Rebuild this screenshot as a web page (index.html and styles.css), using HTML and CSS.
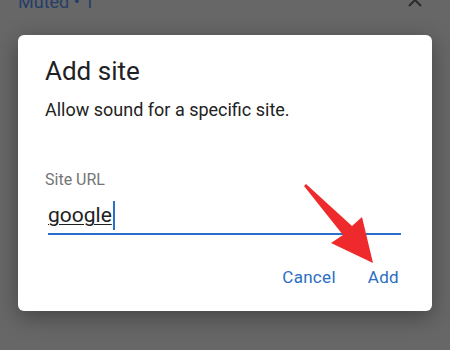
FILE: index.html
```html
<!DOCTYPE html>
<html lang="en">

<head>
    <meta charset="UTF-8">
    <meta name="viewport" content="width=device-width, initial-scale=1.0">
    <title>Add site</title>
    <link rel="stylesheet" href="styles.css">
</head>

<body>
    <!-- page behind the scrim -->
    <div class="topbar">
        <span class="muted">Muted &bull; 1</span>
        <svg class="close" width="14" height="14" viewBox="0 0 14 14">
            <path d="M1 1 L13 13 M13 1 L1 13" stroke="#2b2b2b" stroke-width="2" fill="none" />
        </svg>
    </div>

    <div class="dialog">
        <h1 class="title">Add site</h1>
        <p class="desc">Allow sound for a specific site.</p>
        <div class="label">Site URL</div>
        <div class="field">
            <span class="typed">google</span><span class="caret"></span>
        </div>
        <div class="actions">
            <a href="javascript:;" class="btn">Cancel</a>
            <a href="javascript:;" class="btn">Add</a>
        </div>
    </div>

    <!-- red pointer arrow -->
    <svg class="arrow" width="80" height="90" viewBox="0 0 80 90">
        <polygon points="4,6 6,4 52,46 62,37 73,83 31,63 43,55" fill="#ef2a2c" />
    </svg>
</body>

</html>
```

FILE: styles.css
```css
html,
body {
    background-color: #676767;
}

body {
    margin: 0;
    height: 350px;
    overflow: hidden;
    position: relative;
    font-family: Roboto, "Liberation Sans", sans-serif;
}

.topbar {
    display: flex;
    justify-content: space-between;
    align-items: flex-end;
    height: 24px;
    margin-top: -10px;
    padding: 0 28px 0 18px;
}

.muted {
    font-size: 18px;
    line-height: 24px;
    color: #233e69;
}

.close {
    margin-bottom: 7px;
}

.dialog {
    margin: 21px 18px 0;
    height: 276px;
    box-sizing: border-box;
    background-color: #fff;
    border-radius: 6px;
    padding: 20px 27px 0;
    box-shadow: 0 6px 22px rgba(0, 0, 0, 0.35);
}

.title {
    margin: 0;
    font-size: 26px;
    font-weight: 400;
    line-height: 32px;
    color: #202124;
}

.desc {
    margin: 11px 0 0;
    font-size: 18px;
    line-height: 24px;
    color: #222;
}

.label {
    margin-top: 48px;
    font-size: 16px;
    line-height: 20px;
    color: #757575;
}

.field {
    display: flex;
    align-items: center;
    margin: 11px 4px 0 3px;
    height: 28px;
    padding-bottom: 4px;
    border-bottom: 2px solid #2a6fc9;
}

.typed {
    font-size: 21px;
    line-height: 28px;
    color: #202124;
    text-decoration: underline;
    text-decoration-thickness: 1px;
    text-underline-offset: 2px;
}

.caret {
    width: 2px;
    height: 29px;
    margin-left: 1px;
    background-color: #2a6fc9;
}

.actions {
    display: flex;
    justify-content: flex-end;
    gap: 32px;
    margin: 32px 6px 0 0;
}

.btn {
    font-size: 17px;
    font-weight: 400;
    line-height: 20px;
    color: #2a6dc4;
    text-decoration: none;
    letter-spacing: 0.3px;
}

.arrow {
    position: absolute;
    left: 300px;
    top: 180px;
}
```
